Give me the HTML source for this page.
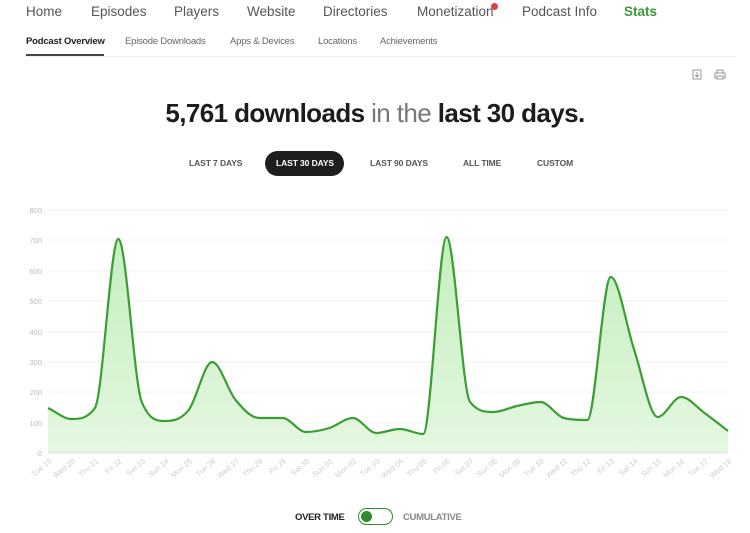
<!DOCTYPE html>
<html><head><meta charset="utf-8"><style>
*{margin:0;padding:0;box-sizing:border-box}
body{width:750px;height:533px;background:#fff;position:relative;overflow:hidden;font-family:"Liberation Sans",sans-serif;color:#222}
.a{position:absolute;white-space:nowrap}
.nav{top:4px;font-size:13.5px;color:#555}
.sub{top:36px;font-size:9.5px;color:#666;letter-spacing:-0.2px}
.btn{top:158px;font-size:8.5px;color:#555;font-weight:bold;letter-spacing:-0.1px}
</style></head><body>
<div class="a nav" style="left:26px">Home</div>
<div class="a nav" style="left:91px">Episodes</div>
<div class="a nav" style="left:174px">Players</div>
<div class="a nav" style="left:247px">Website</div>
<div class="a nav" style="left:323px">Directories</div>
<div class="a nav" style="left:417px">Monetization</div>
<div class="a" style="left:491px;top:3px;width:7px;height:7px;border-radius:50%;background:#d9433f"></div>
<div class="a nav" style="left:522px">Podcast Info</div>
<div class="a nav" style="left:624px;color:#3a9a3a;font-weight:bold">Stats</div>
<div class="a sub" style="left:26px;color:#222;font-weight:bold">Podcast Overview</div>
<div class="a sub" style="left:125px">Episode Downloads</div>
<div class="a sub" style="left:230px">Apps &amp; Devices</div>
<div class="a sub" style="left:318px">Locations</div>
<div class="a sub" style="left:380px">Achievements</div>
<div class="a" style="left:26px;top:56px;width:710px;height:1px;background:#eee"></div>
<div class="a" style="left:26px;top:54px;width:78px;height:2px;background:#444"></div>
<svg class="a" style="left:690px;top:68px" width="40" height="14" viewBox="0 0 40 14"><rect x="3" y="2" width="8" height="9" fill="none" stroke="#999"/><path d="M7 4v5M5 7l2 2 2-2" stroke="#999" fill="none"/><rect x="25" y="5" width="10" height="5" fill="none" stroke="#999"/><rect x="27" y="2" width="6" height="3" fill="none" stroke="#999"/><rect x="27" y="8" width="6" height="3" fill="#fff" stroke="#999"/></svg>
<div class="a" style="left:0;width:750px;top:98px;text-align:center;font-size:26px;font-weight:bold;letter-spacing:-0.6px;color:#1c1c1c">5,761 downloads <span style="font-weight:normal;color:#777">in the</span> last 30 days.</div>
<div class="a btn" style="left:189px">LAST 7 DAYS</div>
<div class="a" style="left:265px;top:151px;width:79px;height:25px;border-radius:13px;background:#1d1f1f"></div>
<div class="a btn" style="left:276px;color:#fff">LAST 30 DAYS</div>
<div class="a btn" style="left:370px">LAST 90 DAYS</div>
<div class="a btn" style="left:463px">ALL TIME</div>
<div class="a btn" style="left:537px">CUSTOM</div>
<svg class="a" style="left:0;top:200px" width="750" height="300" viewBox="0 200 750 300">
<defs><linearGradient id="g" x1="0" y1="0" x2="0" y2="1"><stop offset="0" stop-color="#b8eab0" stop-opacity=".8"/><stop offset="1" stop-color="#e6f8e2"/></linearGradient></defs>
<g font-size="7.5" fill="#bbb" text-anchor="end" font-family="Liberation Sans">
<text x="42" y="213">800</text><text x="42" y="243">700</text><text x="42" y="274">600</text><text x="42" y="304">500</text><text x="42" y="335">400</text><text x="42" y="365">300</text><text x="42" y="395">200</text><text x="42" y="426">100</text><text x="42" y="456">0</text>
</g>
<g stroke="#f0f0f0" stroke-width="1">
<line x1="48" x2="728" y1="210" y2="210"/><line x1="48" x2="728" y1="240" y2="240"/><line x1="48" x2="728" y1="271" y2="271"/><line x1="48" x2="728" y1="301" y2="301"/><line x1="48" x2="728" y1="332" y2="332"/><line x1="48" x2="728" y1="362" y2="362"/><line x1="48" x2="728" y1="392" y2="392"/><line x1="48" x2="728" y1="423" y2="423"/>
</g>
<path id="ar" fill="url(#g)"/>
<line x1="48" x2="728" y1="453" y2="453" stroke="#e4e4e4"/>
<path id="ln" fill="none" stroke="#3a9e34" stroke-width="2.2"/>
<g id="lb" font-size="7.5" fill="#ccc" font-family="Liberation Sans"></g>
</svg>
<div class="a" style="left:295px;top:512px;font-size:9.5px;font-weight:bold;color:#222;letter-spacing:-0.3px">OVER TIME</div>
<div class="a" style="left:358px;top:508px;width:35px;height:17px;border:1.5px solid #2e8b2e;border-radius:9px"></div>
<div class="a" style="left:361px;top:511px;width:11px;height:11px;border-radius:50%;background:#2e8b2e"></div>
<div class="a" style="left:403px;top:512px;font-size:9.5px;font-weight:bold;color:#888;letter-spacing:-0.3px">CUMULATIVE</div>
<script>
var ys=[408,419,408,239,402,421,410,362,400,418,418,432,428,418,433,429,434,237,402,412,406,402,418,420,277,350,417,397,413,431];
var names=["Tue 19","Wed 20","Thu 21","Fri 22","Sat 23","Sun 24","Mon 25","Tue 26","Wed 27","Thu 28","Fri 29","Sat 30","Sun 01","Mon 02","Tue 03","Wed 04","Thu 05","Fri 06","Sat 07","Sun 08","Mon 09","Tue 10","Wed 11","Thu 12","Fri 13","Sat 14","Sun 15","Mon 16","Tue 17","Wed 18"];
var n=ys.length,dx=680/29;
var p=ys.map(function(y,i){return [48+i*dx,y]});
var s=[],m=[];
for(var i=0;i<n-1;i++)s.push((ys[i+1]-ys[i])/dx);
m[0]=s[0];m[n-1]=s[n-2];
for(var i=1;i<n-1;i++){m[i]=(s[i-1]*s[i]<=0)?0:(s[i-1]+s[i])/2;}
for(var i=0;i<n-1;i++){if(s[i]==0){m[i]=m[i+1]=0;continue;}var a=m[i]/s[i],b=m[i+1]/s[i],h=a*a+b*b;if(h>9){var t=3/Math.sqrt(h);m[i]=t*a*s[i];m[i+1]=t*b*s[i];}}
var d="M"+p[0][0]+","+p[0][1];
for(var i=0;i<n-1;i++){var h=dx/3;
d+=" C"+(p[i][0]+h)+","+(p[i][1]+m[i]*h)+" "+(p[i+1][0]-h)+","+(p[i+1][1]-m[i+1]*h)+" "+p[i+1][0]+","+p[i+1][1];}
document.getElementById("ln").setAttribute("d",d);
document.getElementById("ar").setAttribute("d",d+" L728,453 L48,453Z");
var g=document.getElementById("lb"),hh="";
p.forEach(function(q,i){hh+='<text text-anchor="end" transform="translate('+(q[0]+4)+',462) rotate(-40)">'+names[i]+'</text>'});
g.innerHTML=hh;
</script>
</body></html>
